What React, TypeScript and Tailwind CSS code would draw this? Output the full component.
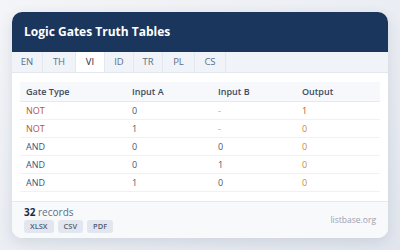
import React from "react";

const rows = [
  { g: "NOT", a: "0", b: "-", o: "1" },
  { g: "NOT", a: "1", b: "-", o: "0" },
  { g: "AND", a: "0", b: "0", o: "0" },
  { g: "AND", a: "0", b: "1", o: "0" },
  { g: "AND", a: "1", b: "0", o: "0" },
];

const tabs = [
  { t: "EN", w: "w-[31px]" },
  { t: "TH", w: "w-[33px]" },
  { t: "VI", w: "w-[29px]" },
  { t: "ID", w: "w-[29px]" },
  { t: "TR", w: "w-[29px]" },
  { t: "PL", w: "w-[32px]" },
  { t: "CS", w: "w-[31px]" },
];

export default function App() {
  return (
    <div
      className="w-[400px] h-[250px] bg-gradient-to-br from-[#f4f5f8] to-[#e1e6ee] p-3"
      style={{ fontFamily: '"Open Sans", "Noto Sans", sans-serif' }}
    >
      <div className="w-[376px] h-[226px] bg-white rounded-[10px] shadow-[0_4px_14px_rgba(30,50,90,0.12)] overflow-hidden flex flex-col">
        <div className="h-[40px] bg-[#1b365d] flex items-center px-3">
          <span className="text-white text-[12px] font-bold">Logic Gates Truth Tables</span>
        </div>
        <div className="h-[21px] bg-[#f0f3f8] border-b border-[#e3e8ef] flex">
          {tabs.map(({ t, w }) => (
            <div
              key={t}
              className={
                w +
                (t === "VI"
                  ? " flex items-center justify-center text-[9.5px] bg-white text-[#1b2a44] border-r border-[#e3e8ef]"
                  : " flex items-center justify-center text-[9.5px] text-[#5a6f8c] border-r border-[#e3e8ef]")
              }
            >
              {t}
            </div>
          ))}
        </div>
        <div className="px-2 pt-[9px] flex-1">
          <div className="grid grid-cols-[106px_86px_84px_1fr] text-[9px]">
            <div className="contents">
              {["Gate Type", "Input A", "Input B", "Output"].map((h) => (
                <div key={h} className="h-[20px] bg-[#f6f8fb] border-b border-[#e6eaf0] flex items-center pl-[6px] text-[#3f4a5e] font-semibold">
                  {h}
                </div>
              ))}
            </div>
            {rows.map((r, i) => (
              <div key={i} className="contents">
                <div className={"h-[18px] border-b border-[#eef1f5] flex items-center pl-[6px] " + (r.g === "NOT" ? "text-[#b4592a]" : "text-[#45507a]")}>{r.g}</div>
                <div className="h-[18px] border-b border-[#eef1f5] flex items-center pl-[6px] text-[#4d5670]">{r.a}</div>
                <div className={"h-[18px] border-b border-[#eef1f5] flex items-center pl-[6px] " + (r.b === "-" ? "text-[#a0a5b2]" : "text-[#4d5670]")}>{r.b}</div>
                <div className={"h-[18px] border-b border-[#eef1f5] flex items-center pl-[6px] " + (r.o === "1" ? "text-[#c0552e]" : "text-[#c98a3c]")}>{r.o}</div>
              </div>
            ))}
          </div>
        </div>
        <div className="h-[37px] bg-[#f8f9fb] border-t border-[#e6eaf0] flex items-end justify-between px-3 pb-[5px]">
          <div className="flex flex-col gap-[1px]">
            <div className="text-[10px] leading-[13px]">
              <span className="font-bold text-[#1b2a44]">32</span>
              <span className="text-[#5a6f8c]"> records</span>
            </div>
            <div className="flex gap-[4px]">
              {["XLSX", "CSV", "PDF"].map((b) => (
                <span key={b} className="bg-[#e2e7ef] text-[#4f5b70] text-[7.5px] font-semibold rounded-[3px] px-[6px] h-[13px] flex items-center">
                  {b}
                </span>
              ))}
            </div>
          </div>
          <span className="text-[8.5px] text-[#9aa0b4] mb-[6px]">listbase.org</span>
        </div>
      </div>
    </div>
  );
}
